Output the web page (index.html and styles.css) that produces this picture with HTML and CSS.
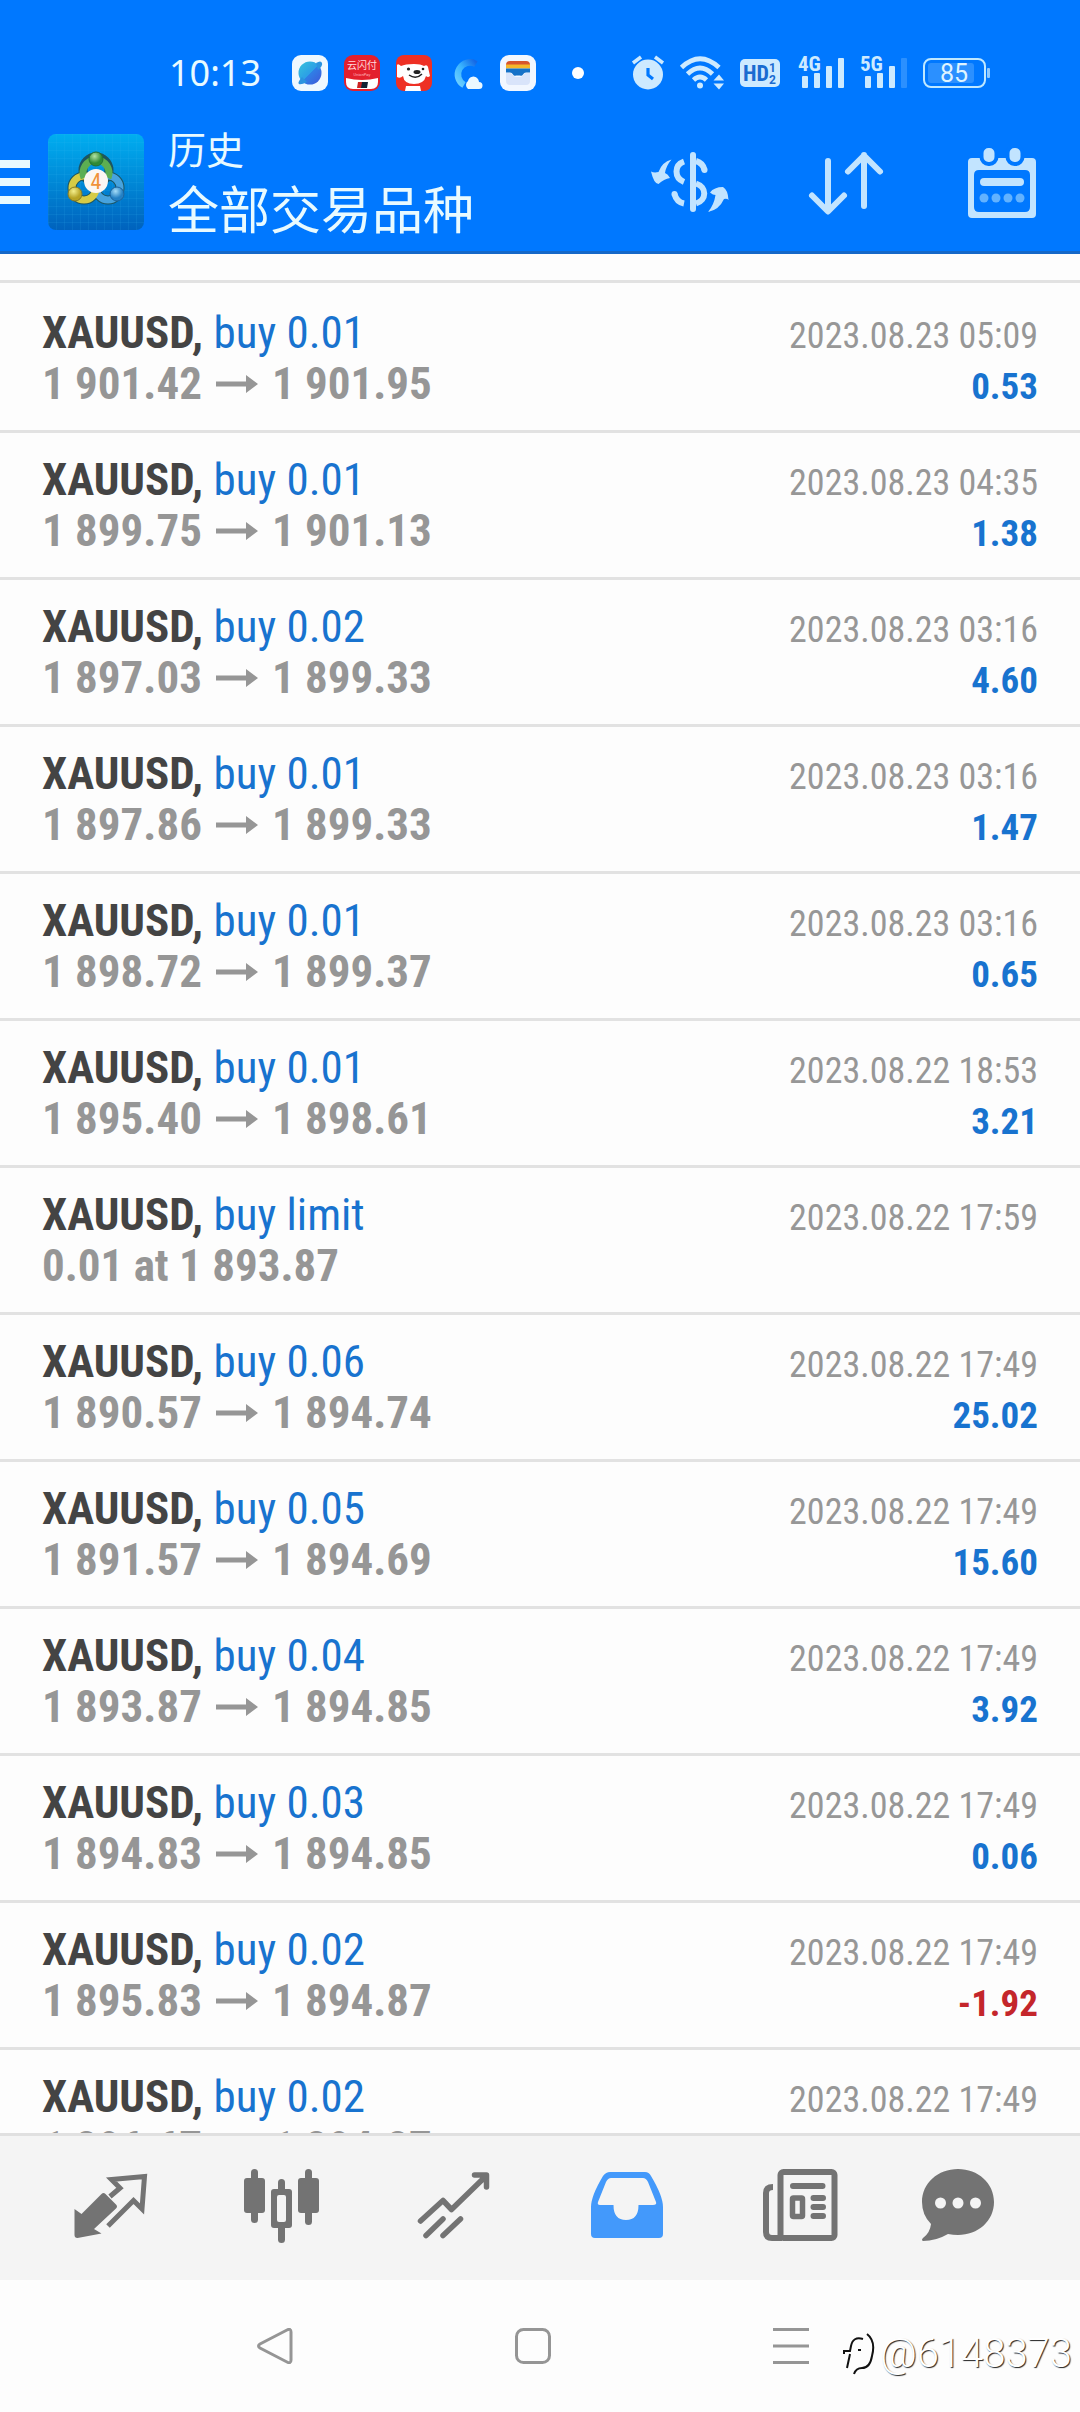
FILE: index.html
```html
<!DOCTYPE html>
<html lang="zh-CN">
<head>
<meta charset="utf-8">
<meta name="viewport" content="width=device-width, initial-scale=1">
<title>历史</title>
<link rel="stylesheet" href="styles.css">
</head>
<body>
<svg class="defs" aria-hidden="true">
  <symbol id="arrow" viewBox="0 0 42 20"><path d="M0 7.5H30V1L42 10 30 19V12.5H0Z" fill="currentColor"/></symbol>
</svg>
<header class="header">
  <div class="status">
    <div class="status-left">
      <span class="clock">10:13</span>
      <svg width="36" height="36" viewBox="0 0 36 36"><defs><linearGradient id="pl" x1="0" y1="0" x2="1" y2="1"><stop offset="0" stop-color="#35c4dc"/><stop offset=".5" stop-color="#2c9fe6"/><stop offset=".52" stop-color="#2f7fe6"/><stop offset="1" stop-color="#3f57d8"/></linearGradient></defs><rect width="36" height="36" rx="9" fill="#eef8ff"/><circle cx="18" cy="18" r="11.5" fill="url(#pl)"/><path d="M24 8q5-3 6 0t-4 7M10 22q-5 6-3 7t8-2" fill="#2b93df"/></svg>
      <svg width="36" height="36" viewBox="0 0 36 36"><rect width="36" height="36" rx="9" fill="#e3202d"/><path d="M2 23q16 4 32 0v4q0 7-7 7H9q-7 0-7-7z" fill="#fff"/><path d="M14 27h5l-1 6h-5z" fill="#c22"/><path d="M18 27h6l-1 6h-6z" fill="#123"/><text x="18" y="14" font-size="10" text-anchor="middle" fill="#ffd9dc" class="cjk">云闪付</text><text x="18" y="21" font-size="4" text-anchor="middle" fill="#ffb9bf">UnionPay</text></svg>
      <svg width="36" height="36" viewBox="0 0 36 36"><rect width="36" height="36" rx="8" fill="#ee3024"/><path d="M1 10q1-2 4 1 4-2 13-2 7 0 10 2 3-2 4 1l2 9q-2 2-4 0-2 8-12 8T7 21q-3 3-6 1z" fill="#fff"/><path d="M10 31h14l1 5H9z" fill="#fff"/><circle cx="12.500" cy="14" r="1.600" fill="#222"/><circle cx="27" cy="14" r="1.300" fill="#222"/><ellipse cx="21" cy="17" rx="3.500" ry="2" fill="#222"/><path d="M13 20q7 5 13-1" fill="none" stroke="#222" stroke-width="1.500"/></svg>
      <svg width="36" height="36" viewBox="0 0 36 36"><defs><linearGradient id="cl" x1="1" y1="0" x2="0" y2="1"><stop offset="0" stop-color="#1468e6"/><stop offset=".5" stop-color="#39b4ff"/><stop offset="1" stop-color="#6fd0ff"/></linearGradient></defs><path d="M28 9A12 12 0 1 0 16 30" fill="none" stroke="url(#cl)" stroke-width="6.500"/><path d="M20 34a5 5 0 0 1 0-8 5.500 5.500 0 0 1 10-2q1 2 1 3a3.500 3.500 0 0 1 0 7z" fill="#eaf8ff"/></svg>
      <svg width="36" height="36" viewBox="0 0 36 36"><rect width="36" height="36" rx="9" fill="#f2f7ff"/><path d="M6 10q0-4 4-4h16q4 0 4 4z" fill="#d8552c"/><path d="M6 9.500h24v4H6z" fill="#f6b62b"/><path d="M6 13.500h24v4h-4q-2 0-3 2t-3 1h-4q-2 1-3-1t-3-2H6z" fill="#1672c8"/><path d="M6 18h4q2 0 3 2t3 2h4q2 0 3-2t3-2h4v8q0 4-4 4H10q-4 0-4-4z" fill="#d9e4fa"/></svg>
      <span class="more-dot"></span>
    </div>
    <div class="status-right">
      <svg width="32" height="36" viewBox="0 0 32 36" fill="#cdeaff"><circle cx="16" cy="19.500" r="15"/><path d="M1 8l8-6M31 8l-8-6" stroke="#cdeaff" stroke-width="3.500"/><path d="M16 13v7l5 4" fill="none" stroke="#0078ff" stroke-width="3.200"/></svg>
      <svg width="44" height="36" viewBox="0 0 44 36" fill="none" stroke="#cdeaff" stroke-width="4.800"><path d="M1.500 12.500Q20-5 39 12.500M7.500 19Q20 7 32.500 19M13.500 25Q20 19 26.500 25"/><circle cx="20" cy="30.500" r="3" fill="#cdeaff" stroke="none"/><path d="M33.500 25.500l5.500-6 5 6zM33.500 28.500l5.500 6 5-6z" fill="#cdeaff" stroke="none"/></svg>
      <svg width="42" height="28" viewBox="0 0 42 28"><rect width="40" height="28" rx="5" fill="#cdeaff"/><g fill="#1a6bd0" font-weight="700"><text x="3" y="22" font-size="22" class="narrow">HD</text><text x="29" y="13" font-size="12">1</text><text x="29" y="25" font-size="12">2</text></g></svg>
      <svg width="46" height="34" viewBox="0 0 46 34" fill="#cdeaff"><text x="0" y="15" font-size="21" font-weight="700" class="narrow">4G</text><rect x="4" y="20" width="6" height="12" rx="1"/><rect x="16" y="17" width="6" height="15" rx="1"/><rect x="28" y="10" width="6" height="22" rx="1"/><rect x="40" y="2" width="6" height="30" rx="1"/></svg>
      <svg width="47" height="34" viewBox="0 0 47 34" fill="#cdeaff"><text x="0" y="15" font-size="21" font-weight="700" class="narrow">5G</text><rect x="5" y="20" width="6" height="12" rx="1"/><rect x="17" y="17" width="6" height="15" rx="1"/><rect x="29" y="10" width="6" height="22" rx="1"/><rect x="41" y="2" width="6" height="30" rx="1" fill="#2b90ff"/></svg>
      <svg width="67" height="30" viewBox="0 0 67 30"><rect x="1" y="1" width="61" height="28" rx="7" fill="none" stroke="#bfe8ff" stroke-width="2"/><rect x="5" y="5" width="46" height="20" rx="3" fill="#2b90ff"/><rect x="64" y="10" width="3" height="10" rx="1" fill="#8fcaff"/><text x="31" y="24" font-size="25" text-anchor="middle" fill="#dff4ff">85</text></svg>
    </div>
  </div>
  <div class="toolbar">
    <button class="menu" aria-label="菜单"><span></span><span></span><span></span></button>
    <svg class="logo" width="96" height="96" viewBox="0 0 96 96">
      <defs>
        <linearGradient id="bg" x1="0" y1="0" x2="0" y2="1"><stop offset="0" stop-color="#00aef0"/><stop offset="1" stop-color="#0062bd"/></linearGradient>
        <pattern id="grid" width="8" height="8" patternUnits="userSpaceOnUse"><path d="M8 0H0V8" fill="none" stroke="#39b9ee" stroke-width="1" opacity=".25"/></pattern>
        <radialGradient id="g" cx=".4" cy=".3"><stop offset="0" stop-color="#b4e3a4"/><stop offset="1" stop-color="#2f8a35"/></radialGradient>
        <radialGradient id="y" cx=".4" cy=".3"><stop offset="0" stop-color="#f4ef8c"/><stop offset="1" stop-color="#b7a324"/></radialGradient>
        <radialGradient id="b" cx=".4" cy=".3"><stop offset="0" stop-color="#a4dcf8"/><stop offset="1" stop-color="#2380c4"/></radialGradient>
      </defs>
      <rect width="96" height="96" rx="8" fill="url(#bg)"/><rect width="96" height="96" rx="8" fill="url(#grid)"/>
      <g fill="none" stroke="#1d5560" stroke-width="9"><circle cx="60" cy="54" r="12"/><circle cx="36" cy="54" r="12"/><circle cx="48" cy="36" r="13"/></g>
      <g fill="none" stroke-width="7"><circle cx="60" cy="54" r="12" stroke="#47a3de"/><circle cx="36" cy="54" r="12" stroke="#d6cb45"/><path d="M36 44a13 13 0 1 1 24 0" stroke="#5cae52"/></g>
      <circle cx="48" cy="25" r="7" fill="url(#g)" stroke="#256e35"/><circle cx="27" cy="60" r="7" fill="url(#y)" stroke="#857a25"/><circle cx="69" cy="60" r="7" fill="url(#b)" stroke="#1d639c"/>
      <circle cx="48" cy="47" r="12" fill="#fbf6f2"/><text x="48" y="55" font-size="22" text-anchor="middle" fill="#f0923a" class="narrow">4</text>
    </svg>
    <div class="titles"><h1 class="title">历史</h1><p class="subtitle">全部交易品种</p></div>
    <div class="actions">
      <button class="icon-button" aria-label="货币"><svg width="90" height="90" viewBox="0 0 90 90" fill="#c2e4ff"><path d="M48 18V72" stroke="#c2e4ff" stroke-width="6" stroke-linecap="round"/><g fill="none" stroke="#c2e4ff" stroke-width="6"><path d="M39 24.500C29 28 29 41 39 45"/><path d="M51 24q7 2 8.500 9" /><path d="M51 46.500C62 50 62 63 51 66.500"/><path d="M29.500 57q2 8 9.500 9.500"/></g><circle cx="59.500" cy="33" r="3"/><circle cx="29.500" cy="57" r="3"/><path d="M13.500 47Q9 47 6 34.500Q9 36 13.500 35Q17 25 26.500 22.500Q21 29 20 36Q23 37 25 41Q19 42 13.500 47Z"/><path d="M83.500 63Q83 53 78 50Q69 50 65 55.500Q68 58 70.500 58Q69 68 63 75Q74 73 79 62Q82 61 83.500 63Z"/></svg></button>
      <button class="icon-button" aria-label="排序"><svg width="90" height="90" viewBox="0 0 90 90" fill="none" stroke="#c2e4ff" stroke-width="6" stroke-linecap="round" stroke-linejoin="round"><path d="M27 24V74M11 58.500L27 74.500 43 58.500M63 69V18M47 34.500L63 18.500 79 34.500"/></svg></button>
      <button class="icon-button" aria-label="日期"><svg width="90" height="90" viewBox="0 0 90 90"><path d="M15 21H75q4 0 4 4V77q0 4-4 4H15q-4 0-4-4V25q0-4 4-4zM22 33q-5 0-5 5V70q0 5 5 5H68q5 0 5-5V38q0-5-5-5z" fill="#c2e4ff" fill-rule="evenodd"/><g fill="#c2e4ff" stroke="#0078ff" stroke-width="4"><rect x="24.500" y="9" width="15" height="18" rx="7"/><rect x="50.500" y="9" width="15" height="18" rx="7"/></g><path d="M27 45H63" stroke="#c2e4ff" stroke-width="8" stroke-linecap="round"/><g fill="#62b2ff"><circle cx="27" cy="61" r="4.500"/><circle cx="39" cy="61" r="4.500"/><circle cx="51" cy="61" r="4.500"/><circle cx="63" cy="61" r="4.500"/></g></svg></button>
    </div>
  </div>
</header>
<main class="history">
  <ul class="deals">
    <li class="deal"><div class="line"><span class="symbol">XAUUSD, <span class="side">buy 0.01</span></span><time class="date">2023.08.23 05:09</time></div><div class="line"><span class="price">1 901.42<svg class="arrow"><use href="#arrow"/></svg>1 901.95</span><span class="profit">0.53</span></div></li>
    <li class="deal"><div class="line"><span class="symbol">XAUUSD, <span class="side">buy 0.01</span></span><time class="date">2023.08.23 04:35</time></div><div class="line"><span class="price">1 899.75<svg class="arrow"><use href="#arrow"/></svg>1 901.13</span><span class="profit">1.38</span></div></li>
    <li class="deal"><div class="line"><span class="symbol">XAUUSD, <span class="side">buy 0.02</span></span><time class="date">2023.08.23 03:16</time></div><div class="line"><span class="price">1 897.03<svg class="arrow"><use href="#arrow"/></svg>1 899.33</span><span class="profit">4.60</span></div></li>
    <li class="deal"><div class="line"><span class="symbol">XAUUSD, <span class="side">buy 0.01</span></span><time class="date">2023.08.23 03:16</time></div><div class="line"><span class="price">1 897.86<svg class="arrow"><use href="#arrow"/></svg>1 899.33</span><span class="profit">1.47</span></div></li>
    <li class="deal"><div class="line"><span class="symbol">XAUUSD, <span class="side">buy 0.01</span></span><time class="date">2023.08.23 03:16</time></div><div class="line"><span class="price">1 898.72<svg class="arrow"><use href="#arrow"/></svg>1 899.37</span><span class="profit">0.65</span></div></li>
    <li class="deal"><div class="line"><span class="symbol">XAUUSD, <span class="side">buy 0.01</span></span><time class="date">2023.08.22 18:53</time></div><div class="line"><span class="price">1 895.40<svg class="arrow"><use href="#arrow"/></svg>1 898.61</span><span class="profit">3.21</span></div></li>
    <li class="deal"><div class="line"><span class="symbol">XAUUSD, <span class="side">buy limit</span></span><time class="date">2023.08.22 17:59</time></div><div class="line"><span class="price">0.01 at 1 893.87</span></div></li>
    <li class="deal"><div class="line"><span class="symbol">XAUUSD, <span class="side">buy 0.06</span></span><time class="date">2023.08.22 17:49</time></div><div class="line"><span class="price">1 890.57<svg class="arrow"><use href="#arrow"/></svg>1 894.74</span><span class="profit">25.02</span></div></li>
    <li class="deal"><div class="line"><span class="symbol">XAUUSD, <span class="side">buy 0.05</span></span><time class="date">2023.08.22 17:49</time></div><div class="line"><span class="price">1 891.57<svg class="arrow"><use href="#arrow"/></svg>1 894.69</span><span class="profit">15.60</span></div></li>
    <li class="deal"><div class="line"><span class="symbol">XAUUSD, <span class="side">buy 0.04</span></span><time class="date">2023.08.22 17:49</time></div><div class="line"><span class="price">1 893.87<svg class="arrow"><use href="#arrow"/></svg>1 894.85</span><span class="profit">3.92</span></div></li>
    <li class="deal"><div class="line"><span class="symbol">XAUUSD, <span class="side">buy 0.03</span></span><time class="date">2023.08.22 17:49</time></div><div class="line"><span class="price">1 894.83<svg class="arrow"><use href="#arrow"/></svg>1 894.85</span><span class="profit">0.06</span></div></li>
    <li class="deal"><div class="line"><span class="symbol">XAUUSD, <span class="side">buy 0.02</span></span><time class="date">2023.08.22 17:49</time></div><div class="line"><span class="price">1 895.83<svg class="arrow"><use href="#arrow"/></svg>1 894.87</span><span class="profit loss">-1.92</span></div></li>
    <li class="deal"><div class="line"><span class="symbol">XAUUSD, <span class="side">buy 0.02</span></span><time class="date">2023.08.22 17:49</time></div><div class="line"><span class="price">1 896.67<svg class="arrow"><use href="#arrow"/></svg>1 894.87</span></div></li>
  </ul>
</main>
<nav class="tabs">
  <button class="tab" aria-label="行情"><svg width="96" height="96" viewBox="0 0 96 96"><path d="M39.500 34q2-2 4 0L54 44.500q2 2 0 4L32 69l7.500 4.500L15.500 78q-3 0-3-3V49l7 5z" fill="currentColor"/><path d="M48 36.500L58 28 49.500 19.500 82.500 16.500 80 49 71.500 40.500 46 66" fill="none" stroke="currentColor" stroke-width="5"/></svg></button>
  <button class="tab" aria-label="图表"><svg width="96" height="96" viewBox="0 0 96 96" fill="currentColor"><rect x="17" y="9" width="7" height="54" rx="3.500"/><rect x="10" y="18" width="21" height="35" rx="3"/><rect x="44" y="19" width="7" height="64" rx="3.500"/><rect x="37" y="29" width="21" height="39" rx="3"/><rect x="43" y="35" width="9" height="27" rx="2" fill="#f4f4f4"/><rect x="71" y="9" width="7" height="56" rx="3.500"/><rect x="64" y="18" width="21" height="35" rx="3"/></svg></button>
  <button class="tab" aria-label="交易"><svg width="96" height="96" viewBox="0 0 96 96" fill="none" stroke="currentColor" stroke-width="5.500" stroke-linecap="round" stroke-linejoin="round"><path d="M14.500 61L37 40.500 45.500 49.500 80 16M68.500 15H80.500V27M20 75.500L37 59M37 75.500L54.500 59"/></svg></button>
  <button class="tab active" aria-label="历史"><svg width="96" height="96" viewBox="0 0 96 96" fill="currentColor"><path fill-rule="evenodd" d="M32 12H67q4 0 6 4 12 20 12 31V74q0 4-4 4H17q-4 0-4-4V47Q13 36 25 16q3-4 7-4zM33 18q-3 0-5 4L20 42q-1 3 2 3H35.500q0 15 12.500 15T60.500 45H75q4 0 3-3L70 22q-2-4-5-4z"/></svg></button>
  <button class="tab" aria-label="新闻"><svg width="96" height="96" viewBox="0 0 96 96" fill="none" stroke="currentColor" stroke-width="6"><rect x="30.500" y="12" width="54" height="66" rx="3"/><path d="M23 27q-7 0-7 6V72q0 6 6 6H32"/><path d="M43 26H72.500M63.500 38H73M63.500 47H73M63.500 56H73" stroke-linecap="round"/><rect x="42.500" y="38" width="10" height="18.500" rx="1" stroke-width="5.500"/></svg></button>
  <button class="tab" aria-label="消息"><svg width="96" height="96" viewBox="0 0 96 96"><path d="M36 9C56 9 72 23 72 42S56 75 36 75Q31 75 26 74 14 81 1 81q-2-1 0-3Q8 73 9 64 0 55 0 42C0 23 16 9 36 9z" fill="currentColor"/><g fill="#f4f4f4"><circle cx="18.500" cy="43" r="5.500"/><circle cx="36" cy="43" r="5.500"/><circle cx="53.500" cy="43" r="5.500"/></g></svg></button>
</nav>
<footer class="system-nav">
  <button class="key" aria-label="返回"><svg width="36" height="36" viewBox="0 0 36 36"><path d="M30 2Q34 0 34 4V32Q34 36 30 34L3 20Q0 18 3 16Z"/></svg></button>
  <button class="key" aria-label="主页"><svg width="36" height="36" viewBox="0 0 36 36"><rect x="1.500" y="1.500" width="33" height="33" rx="7"/></svg></button>
  <button class="key" aria-label="最近任务"><svg width="36" height="36" viewBox="0 0 36 36"><path d="M0 1.500H36M0 18H36M0 34.500H36"/></svg></button>
  <div class="watermark"><svg width="40" height="44" viewBox="0 0 40 44" fill="none" stroke="#111" stroke-width="2"><path d="M27 7Q17 4 15 14L14 19H8V22M14 22L11 36M22 18H25" /><path d="M31 2Q40 9 36 24 34 36 26 36 20 36 18 42"/></svg><span>@6148373</span></div>
</footer>
</body>
</html>
```
FILE: styles.css
```css
* { box-sizing: border-box; }

body {
  display: flex;
  flex-direction: column;
  height: 100vh;
  margin: 0;
  background: #fdfdfd;
  font-family: Roboto, "Noto Sans CJK SC", sans-serif;
}

button {
  display: flex;
  padding: 0;
  border: 0;
  background: none;
  color: inherit;
}

.defs { display: none; }
.narrow { font-family: "Roboto Condensed", "Liberation Sans Narrow", Roboto, sans-serif; }
.cjk { font-family: "Noto Sans CJK SC", sans-serif; }

.header {
  flex: none;
  background: #0078ff;
  border-bottom: 3px solid #1568c8;
  color: #e8faff;
}

.status {
  display: flex;
  align-items: center;
  justify-content: space-between;
  padding: 40px 90px 0 169px;
}
.status-left, .status-right {
  display: flex;
  align-items: center;
  gap: 16px;
}
.status svg { overflow: visible; }
.clock {
  margin-right: 15px;
  font: 36px/66px "Noto Sans", sans-serif;
}
.more-dot {
  width: 12px;
  height: 12px;
  margin-left: 20px;
  border-radius: 50%;
  background: #fff;
}

.toolbar {
  display: flex;
  align-items: center;
  padding: 17px 33px 10px 0;
}
.menu {
  flex-direction: column;
  gap: 10px;
  width: 30px;
  margin-right: 18px;
}
.menu span {
  width: 100%;
  height: 8px;
  background: #e8faff;
}
.titles {
  flex: 1;
  margin-left: 24px;
  font-family: "Noto Sans CJK SC", sans-serif;
}
.title, .subtitle { margin: 0; font-weight: 400; }
.title { font-size: 38px; line-height: 50px; }
.subtitle { font-size: 51px; line-height: 68px; }
.actions { display: flex; gap: 66px; }

.history {
  flex: 1;
  min-height: 0;
  overflow: hidden;
  padding-top: 26px;
}
.deals { margin: 0; padding: 0; list-style: none; }
.deal {
  padding: 21px 42px;
  border-top: 3px solid #e2e2e2;
  font-family: "Roboto Condensed", "Liberation Sans Narrow", Roboto, sans-serif;
}
.deal:first-child { padding-top: 24px; }
.line {
  display: flex;
  align-items: baseline;
  justify-content: space-between;
  font-size: 45px;
  line-height: 51px;
}
.symbol { color: #444; font-weight: 700; }
.side { color: #1873cf; font-weight: 400; }
.price { color: #969696; font-weight: 700; }
.arrow { width: 42px; height: 20px; margin: 0 14px; vertical-align: 5px; }
.date, .profit { line-height: 44px; }
.date { color: #979797; font-size: 36px; }
.profit { color: #1873cf; font-size: 37px; font-weight: 700; }
.loss { color: #c4262b; }

.tabs {
  flex: none;
  display: grid;
  grid-template-columns: repeat(6, 1fr);
  justify-items: center;
  padding: 24px;
  border-top: 3px solid #e0e0e0;
  background: #f4f4f4;
  color: #737373;
}
.active { color: #4399fb; }

.system-nav {
  flex: none;
  position: relative;
  display: grid;
  grid-template-columns: repeat(3, 1fr);
  justify-items: center;
  padding: 48px 160px 48px 146px;
}
.key svg { fill: none; stroke: #959595; stroke-width: 3; }

.watermark {
  position: absolute;
  right: 8px;
  bottom: 34px;
  display: flex;
  align-items: center;
  gap: 4px;
  color: #fff;
  font-size: 40px;
  font-weight: 300;
  line-height: 48px;
  text-shadow: 1px 1px 1px #222;
}
```
